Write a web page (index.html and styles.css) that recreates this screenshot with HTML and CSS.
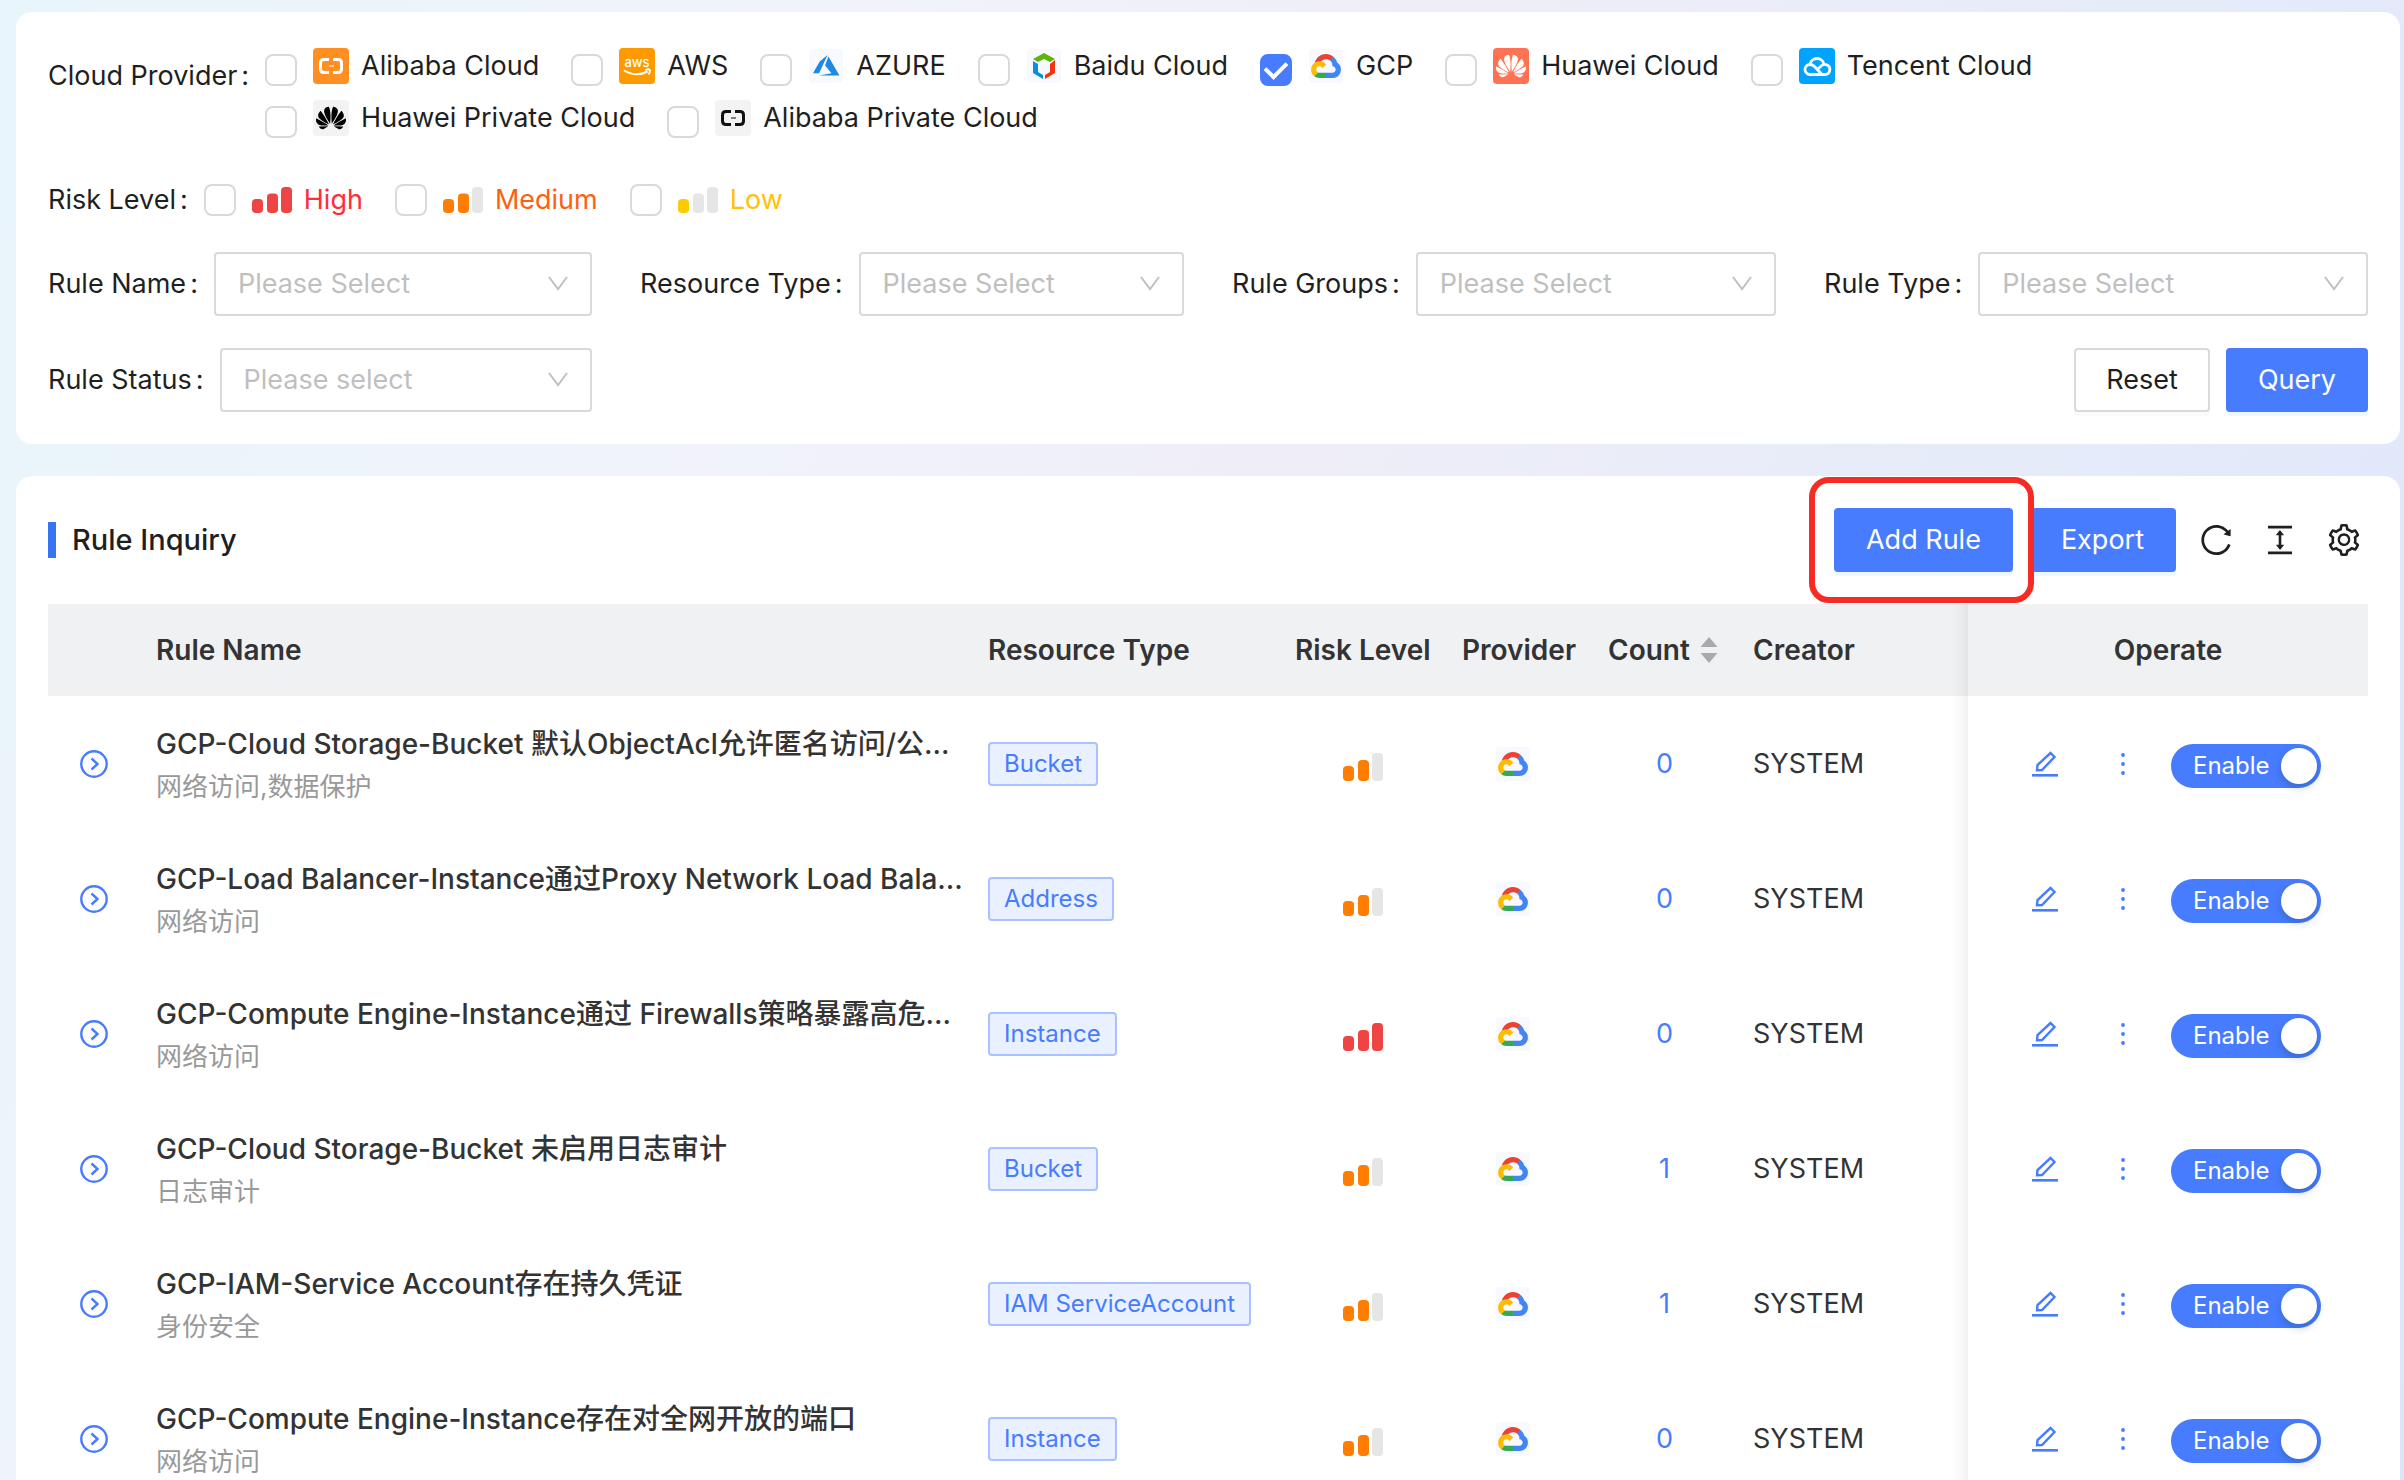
FILE: index.html
```html
<!doctype html>
<html lang="en">

<head>
	<meta charset="utf-8">
	<title>Rule Inquiry</title>
	<link rel="stylesheet" href="styles.css">
</head>

<body>
	<!-- icon sprite -->
	<svg class="sprite" aria-hidden="true">
		<symbol id="i-brackets" viewBox="0 0 36 36">
			<path fill="none" stroke="currentColor" stroke-width="3" d="M16 11.5h-5q-3.500 0-3.500 3.500v6q0 3.500 3.500 3.500h5M20 11.500h5q3.500 0 3.500 3.500v6q0 3.500-3.500 3.500h-5" />
			<path fill="currentColor" opacity=".5" d="M16 17h5v2h-5z" />
		</symbol>
		<symbol id="i-petals" viewBox="0 0 24 24">
			<path fill="currentColor" d="M3.67 6.14S1.82 7.91 1.72 9.78v.35c.08 1.51 1.22 2.4 1.22 2.4 1.83 1.79 6.26 4.04 7.3 4.55 0 0 .06.03.1-.01l.02-.04v-.04C7.52 10.8 3.67 6.14 3.67 6.14zM9.65 18.6c-.02-.08-.1-.08-.1-.08l-7.38.26c.8 1.43 2.15 2.53 3.56 2.2.96-.25 3.16-1.78 3.88-2.3.06-.05.04-.09.04-.09zm.08-.78C6.49 15.63.21 12.28.21 12.28c-.15.46-.2.9-.21 1.3v.07c0 1.07.4 1.82.4 1.82.8 1.69 2.34 2.2 2.34 2.2.7.3 1.4.31 1.4.31.12.02 4.4 0 5.54 0 .05 0 .08-.05.08-.05v-.06c0-.03-.03-.05-.03-.05zM9.06 3.19a3.42 3.42 0 00-2.57 3.15v.41c.03.6.16 1.05.16 1.05.66 2.9 3.86 7.65 4.55 8.65.05.05.1.03.1.03a.1.1 0 00.06-.1c1.06-10.6-1.11-13.42-1.11-13.42-.32.02-1.19.23-1.19.23zm8.299 2.27s-.49-1.8-2.44-2.28c0 0-.57-.14-1.17-.22 0 0-2.18 2.81-1.12 13.43.01.07.06.08.06.08.07.03.1-.03.1-.03.72-1.03 3.9-5.76 4.55-8.64 0 0 .36-1.4.02-2.34zm-2.92 13.07s-.07 0-.09.05c0 0-.01.07.03.1.7.51 2.85 2 3.88 2.3 0 0 .16.05.43.06h.14c.69-.02 1.9-.37 3-2.26l-7.4-.25zm7.83-8.41c.14-2.06-1.94-3.97-1.94-3.98 0 0-3.85 4.66-6.67 10.8 0 0-.03.08.02.13l.04.01h.06c1.06-.53 5.46-2.77 7.28-4.54 0 0 1.15-.93 1.21-2.42zm1.52 2.14s-6.28 3.37-9.52 5.55c0 0-.05.04-.03.11 0 0 .03.06.07.06 1.16 0 5.56 0 5.67-.02 0 0 .57-.02 1.27-.29 0 0 1.56-.5 2.37-2.27 0 0 .73-1.45.17-3.14z" />
		</symbol>
		<symbol id="i-gcp-logo" viewBox="0 0 256 206">
			<path fill="#ea4335" d="M170.252 56.819l22.253-22.253 1.483-9.37C153.437-11.677 88.976-7.496 52.42 33.92 42.267 45.423 34.734 59.764 30.717 74.573l7.97-1.123 44.505-7.34 3.436-3.513c19.797-21.742 53.27-24.667 76.128-6.168l7.496.39z" />
			<path fill="#4285f4" d="M224.205 73.918a100.249 100.249 0 0 0-30.217-48.722l-31.232 31.232a55.515 55.515 0 0 1 20.379 44.037v5.544c15.35 0 27.797 12.445 27.797 27.796 0 15.352-12.446 27.485-27.797 27.485h-55.671l-5.466 5.934v33.34l5.466 5.231h55.67c39.93.311 72.553-31.494 72.864-71.424a72.303 72.303 0 0 0-31.793-60.453" />
			<path fill="#34a853" d="M71.87 205.796h55.593V161.29H71.87a27.275 27.275 0 0 1-11.4-2.498l-7.887 2.42-22.409 22.253-1.952 7.574c12.567 9.489 27.9 14.825 43.647 14.757" />
			<path fill="#fbbc05" d="M71.87 61.425C31.94 61.663-.237 94.228.001 134.158a72.301 72.301 0 0 0 28.222 56.88l32.248-32.246c-13.99-6.322-20.208-22.786-13.887-36.776 6.32-13.99 22.786-20.208 36.775-13.888a27.796 27.796 0 0 1 13.887 13.888l32.248-32.248A72.224 72.224 0 0 0 71.87 61.425" />
		</symbol>
		<symbol id="i-alibaba" viewBox="0 0 36 36">
			<rect width="36" height="36" rx="4" fill="#ff8f22" />
			<use href="#i-brackets" color="#fff" width="36" height="36" />
		</symbol>
		<symbol id="i-alibaba-private" viewBox="0 0 36 36">
			<rect width="36" height="36" rx="4" fill="#f3f3f3" />
			<use href="#i-brackets" color="#111" width="36" height="36" />
		</symbol>
		<symbol id="i-aws" viewBox="0 0 36 36">
			<rect width="36" height="36" rx="4" fill="#ff9900" />
			<text x="18" y="19" text-anchor="middle" fill="#fff" font-size="13" font-weight="500">aws</text>
			<path fill="none" stroke="#fff" stroke-width="2" d="M5 22.500q12.500 7 23.500 1M26 22q5-1.500 5 .5q0 2-1.500 4" />
		</symbol>
		<symbol id="i-azure" viewBox="0 0 36 36">
			<rect x="1" y="1" width="34" height="34" rx="4" fill="#f7f9ff" />
			<path fill="#1e88e5" transform="translate(5 4) scale(1.1)" d="M5.483 21.300H24L14.025 4.013l-3.038 8.347 5.836 6.938L5.483 21.300zM13.230 2.700L6.105 8.677 0 19.253h5.505v.014L13.230 2.700z" />
		</symbol>
		<symbol id="i-baidu" viewBox="0 0 36 36">
			<rect x="1" y="1" width="34" height="34" rx="4" fill="#f7f9ff" />
			<path fill="#5bb50b" d="M18 5l11 6-5 3-6-3-6 3-5-3z" />
			<path fill="#0a8fe0" d="M7 13l5 3v8l5 3v4L7 25z" />
			<path fill="#f0350f" d="M29 12l-5 4v8l-5 3v4l10-6z" />
		</symbol>
		<symbol id="i-gcp" viewBox="0 0 36 36">
			<rect x="1" y="1" width="34" height="34" rx="4" fill="#f8f9ff" />
			<use href="#i-gcp-logo" x="3" y="6" width="30" height="24" />
		</symbol>
		<symbol id="i-huawei" viewBox="0 0 36 36">
			<rect width="36" height="36" rx="4" fill="#ff7253" />
			<use href="#i-petals" color="#fff" x="3" y="3" width="30" height="30" />
		</symbol>
		<symbol id="i-huawei-private" viewBox="0 0 36 36">
			<rect width="36" height="36" rx="4" fill="#f3f3f3" />
			<use href="#i-petals" color="#000" x="3" y="3" width="30" height="30" />
		</symbol>
		<symbol id="i-tencent" viewBox="0 0 36 36">
			<rect width="36" height="36" rx="4" fill="#00a3ff" />
			<path fill="none" stroke="#fff" stroke-width="2.800" d="M11 16a7.200 7.200 0 0 1 14 0M18.500 21.500l3.500-3.500q3-2.500 6-1a5 5 0 0 1-2 9.500H11a5 5 0 0 1 0-10q2.500 0 4.500 2l7.500 8" />
		</symbol>
		<symbol id="i-down" viewBox="0 0 20 16">
			<path fill="none" stroke="currentColor" stroke-width="2" d="M1 1l9 12 9-12" />
		</symbol>
		<symbol id="i-reload" viewBox="64 64 896 896">
			<path d="M909.1 209.3l-56.4 44.1C775.8 155.1 656.2 92 521.9 92 290 92 102.3 279.5 102 511.5 101.7 743.7 289.8 932 521.9 932c181.3 0 335.8-115 394.600-276.1 1.500-4.200-.7-8.900-4.900-10.300l-56.700-19.500a8 8 0 00-10.100 4.800c-1.800 5-3.800 10-5.900 14.900-17.300 41-42.100 77.800-73.700 109.400A344.770 344.770 0 01655.900 829c-42.300 17.900-87.400 27-133.800 27-46.500 0-91.500-9.100-133.800-27A341.500 341.500 0 01279 755.200a342.160 342.160 0 01-73.700-109.400c-17.900-42.400-27-87.400-27-133.900s9.100-91.500 27-133.900c17.300-41 42.100-77.800 73.700-109.400 31.600-31.600 68.400-56.400 109.300-73.800 42.300-17.900 87.400-27 133.800-27 46.500 0 91.500 9.100 133.800 27a341.500 341.500 0 01109.300 73.800c9.900 9.900 19.200 20.400 27.800 31.400l-60.200 47a8 8 0 003 14.100l175.600 43c5 1.200 9.900-2.600 9.900-7.700l.8-180.900c-.1-6.600-7.800-10.300-13-6.200z" />
		</symbol>
		<symbol id="i-density" viewBox="64 64 896 896">
			<path d="M840 836H184c-4.400 0-8 3.600-8 8v60c0 4.400 3.600 8 8 8h656c4.400 0 8-3.600 8-8v-60c0-4.400-3.600-8-8-8zm0-724H184c-4.400 0-8 3.600-8 8v60c0 4.400 3.600 8 8 8h656c4.400 0 8-3.600 8-8v-60c0-4.400-3.600-8-8-8zM610.800 378c6 0 9.400-7 5.700-11.700L515.700 238.700a7.140 7.140 0 00-11.300 0L403.600 366.300a7.230 7.230 0 005.700 11.700H476v268h-62.800c-6 0-9.400 7-5.700 11.700l100.800 127.500c2.900 3.700 8.500 3.700 11.300 0l100.800-127.500c3.700-4.700.4-11.700-5.700-11.700H548V378h62.800z" />
		</symbol>
		<symbol id="i-setting" viewBox="64 64 896 896">
			<path d="M924.8 625.7l-65.500-56c3.100-19 4.700-38.400 4.700-57.800s-1.600-38.800-4.700-57.800l65.500-56a32.030 32.030 0 009.300-35.200l-.9-2.600a443.740 443.740 0 00-79.700-137.900l-1.800-2.100a32.120 32.120 0 00-35.100-9.500l-81.300 28.900c-30-24.600-63.500-44-99.700-57.600l-15.700-85a32.050 32.050 0 00-25.800-25.700l-2.700-.5c-52.100-9.400-106.900-9.400-159 0l-2.700.5a32.050 32.050 0 00-25.800 25.700l-15.800 85.400a351.860 351.860 0 00-99 57.400l-81.900-29.100a32 32 0 00-35.100 9.500l-1.800 2.100a446.020 446.020 0 00-79.700 137.900l-.9 2.600c-4.500 12.500-.8 26.500 9.300 35.200l66.300 56.600c-3.100 18.800-4.600 38-4.600 57.100 0 19.200 1.500 38.400 4.600 57.100L99 625.500a32.030 32.030 0 00-9.300 35.200l.9 2.600c18.100 50.400 44.900 96.900 79.700 137.900l1.800 2.100a32.120 32.120 0 0035.100 9.500l81.900-29.100c29.800 24.500 63.100 43.900 99 57.400l15.800 85.400a32.050 32.050 0 0025.800 25.700l2.700.5a449.400 449.400 0 00159 0l2.700-.5a32.050 32.050 0 0025.800-25.700l15.700-85a350 350 0 0099.700-57.600l81.300 28.900a32 32 0 0035.100-9.500l1.800-2.100c34.800-41.100 61.600-87.500 79.700-137.900l.9-2.600c4.500-12.300.8-26.300-9.300-35zM788.300 465.900c2.500 15.100 3.800 30.600 3.800 46.100s-1.300 31-3.800 46.100l-6.600 40.100 74.700 63.900a370.030 370.030 0 01-42.600 73.600L721 702.800l-31.400 25.800c-23.900 19.600-50.500 35-79.300 45.800l-38.100 14.300-17.900 97a377.500 377.500 0 01-85 0l-17.900-97.200-37.800-14.500c-28.500-10.800-55-26.200-78.700-45.700l-31.400-25.900-93.400 33.200c-17-22.900-31.200-47.600-42.600-73.600l75.500-64.500-6.500-40c-2.400-14.900-3.700-30.300-3.700-45.500 0-15.300 1.200-30.600 3.700-45.500l6.500-40-75.500-64.500c11.300-26.100 25.600-50.700 42.600-73.600l93.400 33.200 31.400-25.900c23.700-19.500 50.200-34.900 78.700-45.700l37.900-14.300 17.900-97.200c28.100-3.200 56.800-3.200 85 0l17.900 97 38.100 14.300c28.700 10.800 55.400 26.200 79.300 45.800l31.400 25.800 92.800-32.900c17 22.900 31.200 47.600 42.600 73.600L781.800 426l6.500 39.900zM512 326c-97.200 0-176 78.800-176 176s78.800 176 176 176 176-78.800 176-176-78.800-176-176-176zm79.200 255.200A111.600 111.600 0 01512 614c-29.900 0-58-11.700-79.200-32.800A111.600 111.600 0 01400 502c0-29.900 11.700-58 32.800-79.200C454 401.600 482.100 390 512 390c29.900 0 58 11.600 79.200 32.800A111.600 111.600 0 01624 502c0 29.900-11.700 58-32.800 79.200z" />
		</symbol>
		<symbol id="i-expand" viewBox="0 0 28 28">
			<circle cx="14" cy="14" r="12.700" fill="none" stroke="currentColor" stroke-width="2.400" />
			<path fill="none" stroke="currentColor" stroke-width="2.400" d="M11.500 8.500l6 5.500-6 5.500" />
		</symbol>
		<symbol id="i-edit" viewBox="0 0 28 28">
			<path fill="none" stroke="currentColor" stroke-width="2.400" d="M6 20.300l.5-5.300L19.500 3l4 4L11 20z" />
			<path fill="currentColor" d="M1 24h26v2.600H1z" />
		</symbol>
		<symbol id="i-more" viewBox="0 0 28 28">
			<path fill="none" stroke="currentColor" stroke-width="3.800" stroke-linecap="round" d="M14 5h.01M14 14h.01M14 23h.01" />
		</symbol>
		<symbol id="i-sort" viewBox="0 0 18 26">
			<path fill="#aaaaac" d="M9 0l8.500 10H.5zM9 26l8.500-10H.5z" />
		</symbol>
		<symbol id="i-high" viewBox="0 0 40 28" preserveAspectRatio="none">
			<rect y="13" width="11" height="15" rx="4" fill="#ee4444" />
			<rect x="15" y="7" width="11" height="21" rx="4" fill="#ee4444" />
			<rect x="29" width="11" height="28" rx="4" fill="#ee4444" />
		</symbol>
		<symbol id="i-medium" viewBox="0 0 40 28" preserveAspectRatio="none">
			<rect y="13" width="11" height="15" rx="4" fill="#ff7d00" />
			<rect x="15" y="7" width="11" height="21" rx="4" fill="#ff7d00" />
			<rect x="29" width="11" height="28" rx="4" fill="#e6e6e6" />
		</symbol>
		<symbol id="i-low" viewBox="0 0 40 28" preserveAspectRatio="none">
			<rect y="13" width="11" height="15" rx="4" fill="#fccc00" />
			<rect x="15" y="7" width="11" height="21" rx="4" fill="#e6e6e6" />
			<rect x="29" width="11" height="28" rx="4" fill="#e6e6e6" />
		</symbol>
	</svg>

	<form class="panel filters" action="#">
		<div class="filter-row providers" role="group" aria-labelledby="lbl-provider">
			<span class="label" id="lbl-provider">Cloud Provider</span>
			<div class="options">
				<label class="option"><input type="checkbox"><svg class="logo"><use href="#i-alibaba" /></svg>Alibaba Cloud</label>
				<label class="option"><input type="checkbox"><svg class="logo"><use href="#i-aws" /></svg>AWS</label>
				<label class="option"><input type="checkbox"><svg class="logo"><use href="#i-azure" /></svg>AZURE</label>
				<label class="option"><input type="checkbox"><svg class="logo"><use href="#i-baidu" /></svg>Baidu Cloud</label>
				<label class="option"><input type="checkbox" checked><svg class="logo"><use href="#i-gcp" /></svg>GCP</label>
				<label class="option"><input type="checkbox"><svg class="logo"><use href="#i-huawei" /></svg>Huawei Cloud</label>
				<label class="option"><input type="checkbox"><svg class="logo"><use href="#i-tencent" /></svg>Tencent Cloud</label>
				<label class="option"><input type="checkbox"><svg class="logo"><use href="#i-huawei-private" /></svg>Huawei Private Cloud</label>
				<label class="option"><input type="checkbox"><svg class="logo"><use href="#i-alibaba-private" /></svg>Alibaba Private Cloud</label>
			</div>
		</div>

		<div class="filter-row risks" role="group" aria-labelledby="lbl-risk">
			<span class="label" id="lbl-risk">Risk Level</span>
			<div class="options">
				<label class="option high"><input type="checkbox"><svg class="bars"><use href="#i-high" /></svg>High</label>
				<label class="option medium"><input type="checkbox"><svg class="bars"><use href="#i-medium" /></svg>Medium</label>
				<label class="option low"><input type="checkbox"><svg class="bars"><use href="#i-low" /></svg>Low</label>
			</div>
		</div>

		<div class="fields">
			<div class="field">
				<label class="label" for="rule-name">Rule Name</label>
				<div class="select"><select id="rule-name"><option>Please Select</option></select><svg><use href="#i-down" /></svg></div>
			</div>
			<div class="field">
				<label class="label" for="resource-type">Resource Type</label>
				<div class="select"><select id="resource-type"><option>Please Select</option></select><svg><use href="#i-down" /></svg></div>
			</div>
			<div class="field">
				<label class="label" for="rule-groups">Rule Groups</label>
				<div class="select"><select id="rule-groups"><option>Please Select</option></select><svg><use href="#i-down" /></svg></div>
			</div>
			<div class="field">
				<label class="label" for="rule-type">Rule Type</label>
				<div class="select"><select id="rule-type"><option>Please Select</option></select><svg><use href="#i-down" /></svg></div>
			</div>
			<div class="field">
				<label class="label" for="rule-status">Rule Status</label>
				<div class="select"><select id="rule-status"><option>Please select</option></select><svg><use href="#i-down" /></svg></div>
			</div>
			<div class="actions">
				<button type="reset" class="btn">Reset</button>
				<button type="button" class="btn primary">Query</button>
			</div>
		</div>
	</form>

	<main class="panel rules">
		<header class="toolbar">
			<h1>Rule Inquiry</h1>
			<span class="marked"><button type="button" class="btn primary">Add Rule</button></span>
			<button type="button" class="btn primary">Export</button>
			<div class="tools">
				<button type="button" class="icon-btn" aria-label="Reload"><svg><use href="#i-reload" /></svg></button>
				<button type="button" class="icon-btn" aria-label="Density"><svg><use href="#i-density" /></svg></button>
				<button type="button" class="icon-btn" aria-label="Settings"><svg><use href="#i-setting" /></svg></button>
			</div>
		</header>

		<table>
			<colgroup>
				<col class="c-expand">
				<col>
				<col class="c-type">
				<col class="c-risk">
				<col class="c-provider">
				<col class="c-count">
				<col class="c-creator">
				<col class="c-operate">
			</colgroup>
			<thead>
				<tr>
					<th></th>
					<th>Rule Name</th>
					<th>Resource Type</th>
					<th class="center">Risk Level</th>
					<th class="center">Provider</th>
					<th><span class="sortable">Count<svg><use href="#i-sort" /></svg></span></th>
					<th>Creator</th>
					<th class="center operate">Operate</th>
				</tr>
			</thead>
			<tbody>
				<tr>
					<td><button type="button" class="icon-btn link expand" aria-label="Expand"><svg><use href="#i-expand" /></svg></button></td>
					<td><div class="name">GCP-Cloud Storage-Bucket 默认ObjectAcl允许匿名访问/公...</div><div class="group">网络访问,数据保护</div></td>
					<td><span class="tag">Bucket</span></td>
					<td><svg class="bars"><use href="#i-medium" /></svg></td>
					<td class="provider"><svg class="logo"><use href="#i-gcp" /></svg></td>
					<td class="center"><a href="#">0</a></td>
					<td>SYSTEM</td>
					<td class="operate"><div class="ops"><button type="button" class="icon-btn link" aria-label="Edit"><svg><use href="#i-edit" /></svg></button><button type="button" class="icon-btn link" aria-label="More"><svg><use href="#i-more" /></svg></button><button type="button" class="switch" role="switch" aria-checked="true">Enable</button></div></td>
				</tr>
				<tr>
					<td><button type="button" class="icon-btn link expand" aria-label="Expand"><svg><use href="#i-expand" /></svg></button></td>
					<td><div class="name">GCP-Load Balancer-Instance通过Proxy Network Load Bala...</div><div class="group">网络访问</div></td>
					<td><span class="tag">Address</span></td>
					<td><svg class="bars"><use href="#i-medium" /></svg></td>
					<td class="provider"><svg class="logo"><use href="#i-gcp" /></svg></td>
					<td class="center"><a href="#">0</a></td>
					<td>SYSTEM</td>
					<td class="operate"><div class="ops"><button type="button" class="icon-btn link" aria-label="Edit"><svg><use href="#i-edit" /></svg></button><button type="button" class="icon-btn link" aria-label="More"><svg><use href="#i-more" /></svg></button><button type="button" class="switch" role="switch" aria-checked="true">Enable</button></div></td>
				</tr>
				<tr>
					<td><button type="button" class="icon-btn link expand" aria-label="Expand"><svg><use href="#i-expand" /></svg></button></td>
					<td><div class="name">GCP-Compute Engine-Instance通过 Firewalls策略暴露高危...</div><div class="group">网络访问</div></td>
					<td><span class="tag">Instance</span></td>
					<td><svg class="bars"><use href="#i-high" /></svg></td>
					<td class="provider"><svg class="logo"><use href="#i-gcp" /></svg></td>
					<td class="center"><a href="#">0</a></td>
					<td>SYSTEM</td>
					<td class="operate"><div class="ops"><button type="button" class="icon-btn link" aria-label="Edit"><svg><use href="#i-edit" /></svg></button><button type="button" class="icon-btn link" aria-label="More"><svg><use href="#i-more" /></svg></button><button type="button" class="switch" role="switch" aria-checked="true">Enable</button></div></td>
				</tr>
				<tr>
					<td><button type="button" class="icon-btn link expand" aria-label="Expand"><svg><use href="#i-expand" /></svg></button></td>
					<td><div class="name">GCP-Cloud Storage-Bucket 未启用日志审计</div><div class="group">日志审计</div></td>
					<td><span class="tag">Bucket</span></td>
					<td><svg class="bars"><use href="#i-medium" /></svg></td>
					<td class="provider"><svg class="logo"><use href="#i-gcp" /></svg></td>
					<td class="center"><a href="#">1</a></td>
					<td>SYSTEM</td>
					<td class="operate"><div class="ops"><button type="button" class="icon-btn link" aria-label="Edit"><svg><use href="#i-edit" /></svg></button><button type="button" class="icon-btn link" aria-label="More"><svg><use href="#i-more" /></svg></button><button type="button" class="switch" role="switch" aria-checked="true">Enable</button></div></td>
				</tr>
				<tr>
					<td><button type="button" class="icon-btn link expand" aria-label="Expand"><svg><use href="#i-expand" /></svg></button></td>
					<td><div class="name">GCP-IAM-Service Account存在持久凭证</div><div class="group">身份安全</div></td>
					<td><span class="tag">IAM ServiceAccount</span></td>
					<td><svg class="bars"><use href="#i-medium" /></svg></td>
					<td class="provider"><svg class="logo"><use href="#i-gcp" /></svg></td>
					<td class="center"><a href="#">1</a></td>
					<td>SYSTEM</td>
					<td class="operate"><div class="ops"><button type="button" class="icon-btn link" aria-label="Edit"><svg><use href="#i-edit" /></svg></button><button type="button" class="icon-btn link" aria-label="More"><svg><use href="#i-more" /></svg></button><button type="button" class="switch" role="switch" aria-checked="true">Enable</button></div></td>
				</tr>
				<tr>
					<td><button type="button" class="icon-btn link expand" aria-label="Expand"><svg><use href="#i-expand" /></svg></button></td>
					<td><div class="name">GCP-Compute Engine-Instance存在对全网开放的端口</div><div class="group">网络访问</div></td>
					<td><span class="tag">Instance</span></td>
					<td><svg class="bars"><use href="#i-medium" /></svg></td>
					<td class="provider"><svg class="logo"><use href="#i-gcp" /></svg></td>
					<td class="center"><a href="#">0</a></td>
					<td>SYSTEM</td>
					<td class="operate"><div class="ops"><button type="button" class="icon-btn link" aria-label="Edit"><svg><use href="#i-edit" /></svg></button><button type="button" class="icon-btn link" aria-label="More"><svg><use href="#i-more" /></svg></button><button type="button" class="switch" role="switch" aria-checked="true">Enable</button></div></td>
				</tr>
			</tbody>
		</table>
	</main>
</body>

</html>
```

FILE: styles.css
```css
* {
	box-sizing: border-box;
}

body {
	margin: 0;
	padding: 12px 4px 0 16px;
	background: linear-gradient(110deg, #e8f5fb, #f1f3fc 28%, #efeef8 48%, #e5ebf9 75%, #dde5fb);
	color: #1f1f1f;
	font: 27px/44px Inter, "Noto Sans CJK SC", sans-serif;
}

button,
select {
	font: inherit;
}

svg {
	display: block;
	fill: currentColor;
}

a {
	color: #477cff;
	text-decoration: none;
}

.sprite {
	display: none;
}

.panel {
	background: #fff;
	border-radius: 16px;
	padding: 32px;
}

/* filters */

.filters {
	padding-top: 28px;
	margin-bottom: 32px;
}

.filter-row {
	display: flex;
	align-items: flex-start;
}

.label {
	flex: none;
	margin-right: 16px;
}

.label::after {
	content: ":";
	margin-left: 4px;
}

.providers {
	margin-bottom: 24px;
}

.providers .label {
	line-height: 72px;
}

.risks {
	align-items: center;
	min-height: 64px;
	margin-bottom: 20px;
}

.options {
	display: flex;
	flex-wrap: wrap;
	column-gap: 32px;
}

.option {
	display: flex;
	align-items: center;
	height: 52px;
	gap: 12px;
	white-space: nowrap;
}

input[type="checkbox"] {
	appearance: none;
	display: grid;
	place-items: center;
	width: 32px;
	height: 32px;
	margin: 0 4px 0 0;
	border: 2px solid #d9d9d9;
	border-radius: 8px;
	background: #fff;
}

.providers input[type="checkbox"] {
	margin-top: 8px;
}

input[type="checkbox"]:checked {
	background: #477cff;
	border-color: #477cff;
}

input:checked::after {
	content: "";
	width: 10px;
	height: 17px;
	margin-top: -5px;
	border: solid #fff;
	border-width: 0 4px 4px 0;
	transform: rotate(45deg);
}

.logo {
	width: 36px;
	height: 36px;
}

.bars {
	width: 40px;
	height: 28px;
}

.risks .bars {
	height: 26px;
}

.high {
	color: #ff2d3a;
}

.medium {
	color: #ff6010;
}

.low {
	color: #ffc107;
}

.fields {
	display: grid;
	grid-template-columns: repeat(4, 1fr);
	gap: 32px 48px;
}

.field {
	display: flex;
	align-items: center;
}

.select {
	flex: 1;
	display: grid;
	align-items: center;
	min-width: 0;
}

.select select,
.select svg {
	grid-area: 1 / 1;
}

.select select {
	appearance: none;
	width: 100%;
	height: 64px;
	padding: 0 22px;
	border: 2px solid #d9d9d9;
	border-radius: 4px;
	background: #fff;
	color: #bfbfbf;
}

.select svg {
	justify-self: end;
	width: 20px;
	height: 16px;
	margin-right: 24px;
	color: #bfbfbf;
	pointer-events: none;
}

.actions {
	grid-column: 2 / -1;
	display: flex;
	justify-content: flex-end;
	gap: 16px;
}

.btn {
	height: 64px;
	padding: 0 30px;
	border: 2px solid #d9d9d9;
	border-radius: 4px;
	background: #fff;
	color: #1f1f1f;
	box-shadow: 0 4px 0 rgba(0, 0, 0, .02);
}

.btn.primary {
	border-color: #477cff;
	background: #477cff;
	color: #fff;
	box-shadow: 0 4px 0 rgba(5, 95, 255, .06);
}

/* rule list */

.toolbar {
	display: flex;
	align-items: center;
	gap: 16px;
	margin-bottom: 32px;
}

.toolbar h1 {
	flex: 1;
	margin: 0;
	padding-left: 16px;
	border-left: 8px solid #3574f2;
	font-size: 29px;
	line-height: 36px;
	font-weight: 500;
}

.marked {
	position: relative;
	display: flex;
}

.marked::after {
	content: "";
	position: absolute;
	inset: -31px -21px -31px -25px;
	border: 6px solid #f52c25;
	border-radius: 20px;
	pointer-events: none;
	z-index: 1;
}

.tools {
	display: flex;
	gap: 32px;
	padding: 0 8px;
}

.icon-btn {
	display: block;
	padding: 0;
	border: 0;
	background: none;
	color: #1f1f1f;
}

.icon-btn svg {
	width: 32px;
	height: 32px;
}

.icon-btn.link {
	color: #477cff;
}

.icon-btn.link svg {
	width: 28px;
	height: 28px;
}

.expand {
	margin: 0 auto;
}

table {
	width: 100%;
	table-layout: fixed;
	border-collapse: collapse;
	color: #333;
}

.c-expand {
	width: 92px;
}

.c-type {
	width: 307px;
}

.c-risk {
	width: 167px;
}

.c-provider {
	width: 146px;
}

.c-count {
	width: 145px;
}

.c-creator {
	width: 231px;
}

.c-operate {
	width: 400px;
}

th,
td {
	padding: 0 16px;
	text-align: left;
	white-space: nowrap;
}

th {
	height: 92px;
	background: #f0f1f3;
	font-size: 28px;
	font-weight: 600;
}

td {
	height: 135px;
}

.center {
	text-align: center;
}

td .logo {
	margin: 0 auto;
}

td .bars {
	margin: 6px auto 0;
}

td.provider {
	padding-right: 28px;
}

.sortable {
	display: flex;
	align-items: center;
	gap: 10px;
}

.sortable svg {
	width: 18px;
	height: 26px;
}

.name {
	padding-top: 2px;
	font-size: 28px;
	font-weight: 500;
}

.group {
	color: #999;
	font-size: 26px;
	line-height: 42px;
}

.tag {
	display: inline-block;
	padding: 0 14px;
	border: 2px solid #a6c3ff;
	border-radius: 4px;
	background: #e9f0ff;
	color: #477cff;
	font-size: 24px;
	line-height: 40px;
	vertical-align: middle;
}

/* the fixed column drops a shadow over its left neighbour */
.operate {
	position: relative;
}

.operate::before {
	content: "";
	position: absolute;
	top: 0;
	bottom: 0;
	right: 100%;
	width: 60px;
	box-shadow: inset -20px 0 16px -16px rgba(5, 5, 5, .08);
	pointer-events: none;
}

.ops {
	display: flex;
	align-items: center;
	gap: 50px;
	padding-left: 47px;
}

.switch {
	display: flex;
	align-items: center;
	justify-content: space-between;
	width: 150px;
	height: 44px;
	margin: 4px 0 0 -16px;
	padding: 0 4px 0 22px;
	border: 0;
	border-radius: 22px;
	background: #477cff;
	color: #fff;
	font-size: 24px;
}

.switch::after {
	content: "";
	width: 36px;
	height: 36px;
	border-radius: 50%;
	background: #fff;
	box-shadow: 0 4px 8px rgba(0, 35, 11, .2);
}
```
